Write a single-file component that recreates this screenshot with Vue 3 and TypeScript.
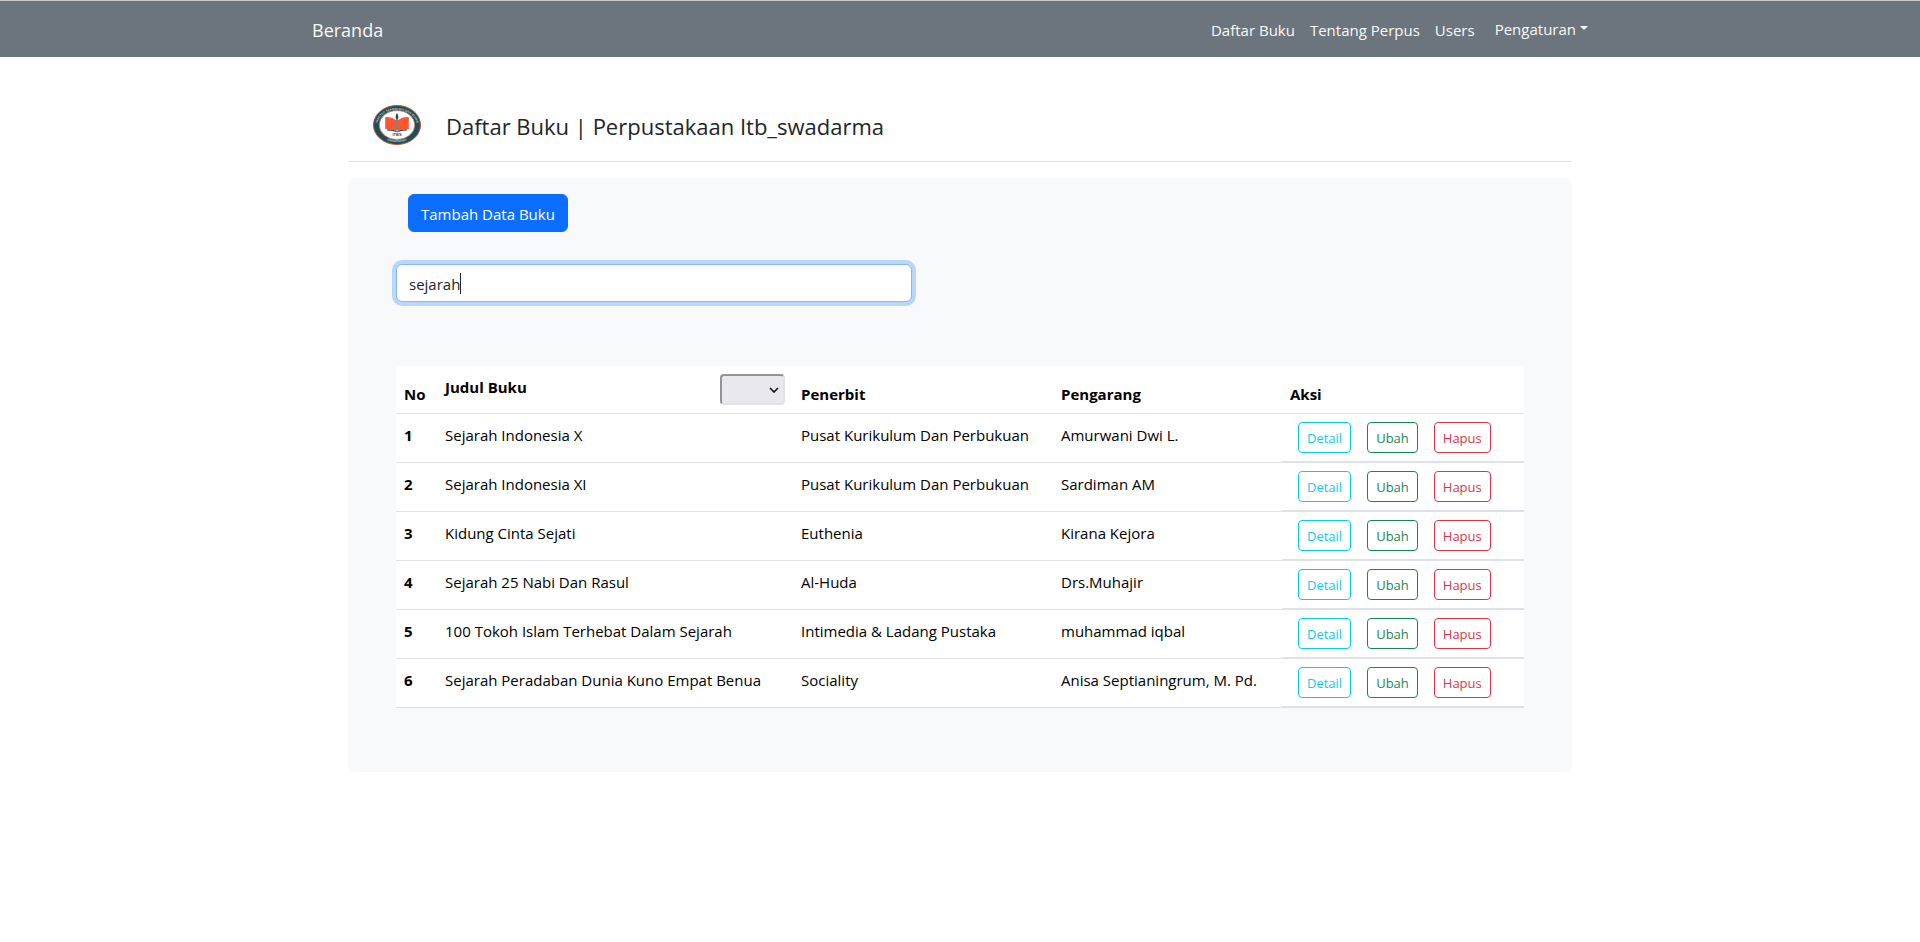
<script setup lang="ts">
import { computed, onMounted, ref } from 'vue'

interface Book {
  id: number
  title: string
  publisher: string
  author: string
}

const books: Book[] = [
  { id: 1, title: 'Sejarah Indonesia X', publisher: 'Pusat Kurikulum Dan Perbukuan', author: 'Amurwani Dwi L.' },
  { id: 2, title: 'Sejarah Indonesia XI', publisher: 'Pusat Kurikulum Dan Perbukuan', author: 'Sardiman AM' },
  { id: 3, title: 'Kidung Cinta Sejati', publisher: 'Euthenia', author: 'Kirana Kejora' },
  { id: 4, title: 'Sejarah 25 Nabi Dan Rasul', publisher: 'Al-Huda', author: 'Drs.Muhajir' },
  { id: 5, title: '100 Tokoh Islam Terhebat Dalam Sejarah', publisher: 'Intimedia & Ladang Pustaka', author: 'muhammad iqbal' },
  { id: 6, title: 'Sejarah Peradaban Dunia Kuno Empat Benua', publisher: 'Sociality', author: 'Anisa Septianingrum, M. Pd.' },
]

const query = ref('sejarah')
const order = ref('')
const searchBox = ref<HTMLInputElement | null>(null)

const rows = computed<Book[]>(() => {
  if (!order.value) return books
  const sorted = [...books].sort((a, b) => a.title.localeCompare(b.title))
  return order.value === 'asc' ? sorted : sorted.reverse()
})

onMounted(() => searchBox.value?.focus())
</script>

<template>
  <div class="page">
    <header class="topbar">
      <nav class="container topbar-inner" aria-label="Utama">
        <a class="brand" href="#">Beranda</a>
        <ul class="links">
          <li><a href="#buku">Daftar Buku</a></li>
          <li><a href="#tentang">Tentang Perpus</a></li>
          <li><a href="#users">Users</a></li>
        </ul>
        <button class="menu" type="button" aria-haspopup="true">
          Pengaturan<span class="caret" aria-hidden="true"></span>
        </button>
      </nav>
    </header>

    <main class="container content">
      <div class="heading">
        <svg class="logo" viewBox="0 0 48 40" aria-hidden="true">
          <ellipse cx="24" cy="20" rx="23.5" ry="19.5" fill="#1f4f55" stroke="#b5583f" />
          <ellipse cx="24" cy="20" rx="17.8" ry="14.4" fill="#fff" stroke="#c8674c" stroke-width="0.8" />
          <path id="ring-top" d="M4.6 24 A19.8 15.9 0 1 1 43.4 24" fill="none" />
          <path id="ring-bottom" d="M4 27 A22.2 18 0 0 0 44 27" fill="none" />
          <text class="ring"><textPath href="#ring-top" startOffset="50%">INSTITUT TEKNOLOGI DAN BISNIS</textPath></text>
          <text class="ring"><textPath href="#ring-bottom" startOffset="50%">SWADHARMA</textPath></text>
          <path d="M12.2 12.2 Q18.5 11.6 23.2 15.2 V26 Q18.5 23.4 12.2 24Z" fill="#ff5630" />
          <path d="M35.8 12.2 Q29.5 11.6 24.8 15.2 V26 Q29.5 23.4 35.8 24Z" fill="#ff5630" />
          <path d="M24 8 Q26.4 11.5 24.6 14.5 V25.5 H23.4 V14.5 Q21.6 11.5 24 8Z" fill="#1f4f55" />
          <path d="M14 24.4 Q20 24 24 26.4 Q28 24 34 24.4 V25.5 Q28 25.4 24 27.3 Q20 25.4 14 25.5Z" fill="#1f4f55" />
          <text class="initials" x="24" y="31">ITBS</text>
        </svg>
        <h1>Daftar Buku | Perpustakaan Itb_swadarma</h1>
      </div>

      <section class="panel" aria-label="Daftar buku">
        <button class="add" type="button">Tambah Data Buku</button>

        <div class="search">
          <input ref="searchBox" v-model="query" type="text" aria-label="Cari buku" autocomplete="off" spellcheck="false" />
          <span class="cursor" aria-hidden="true">{{ query }}</span>
        </div>

        <table>
          <colgroup>
            <col class="c-no" />
            <col class="c-title" />
            <col class="c-publisher" />
            <col class="c-author" />
            <col class="c-action" />
          </colgroup>
          <thead>
            <tr>
              <th scope="col">No</th>
              <th scope="col" class="sortable">
                <div class="title-head">
                  <label for="order">Judul Buku</label>
                  <span class="picker">
                    <select id="order" v-model="order">
                      <option value=""></option>
                      <option value="asc">A-Z</option>
                      <option value="desc">Z-A</option>
                    </select>
                    <svg viewBox="0 0 10 6" aria-hidden="true">
                      <path d="M1 1 L5 5 L9 1" fill="none" stroke="#111" stroke-width="1.6" />
                    </svg>
                  </span>
                </div>
              </th>
              <th scope="col">Penerbit</th>
              <th scope="col">Pengarang</th>
              <th scope="col">Aksi</th>
            </tr>
          </thead>
          <tbody>
            <tr v-for="(book, index) in rows" :key="book.id">
              <th scope="row">{{ index + 1 }}</th>
              <td>{{ book.title }}</td>
              <td>{{ book.publisher }}</td>
              <td>{{ book.author }}</td>
              <td class="actions">
                <div class="buttons">
                  <button class="info" type="button">Detail</button>
                  <button class="success" type="button">Ubah</button>
                  <button class="danger" type="button">Hapus</button>
                </div>
              </td>
            </tr>
          </tbody>
        </table>
      </section>
    </main>
  </div>
</template>

<style>
body {
  margin: 0;
  background: #fff;
}
</style>

<style scoped>
.page,
.page button,
.page input,
.page select {
  font-family: "Open Sans", "Noto Sans", sans-serif;
  font-size: 15px;
  line-height: 24px;
}

.page {
  color: #212529;
}

.page * {
  box-sizing: border-box;
}

.container {
  max-width: 1320px;
  margin: 0 auto;
}

.topbar {
  background: #6c757d;
  border-top: 1px solid #c9cbc8;
}

.topbar-inner {
  display: flex;
  align-items: center;
  padding: 10px 32px 8px 12px;
  min-height: 56px;
}

.topbar a {
  color: #f8f9fa;
  text-decoration: none;
}

.topbar .brand {
  font-size: 18px;
  line-height: 30px;
  margin-right: auto;
}

.links {
  display: flex;
  gap: 15px;
  list-style: none;
  margin: 0;
  padding: 0;
}

.page .menu {
  display: flex;
  align-items: center;
  margin: 0 0 2px 20px;
  padding: 0;
  border: 0;
  background: none;
  color: #f8f9fa;
}

.caret {
  margin: 0 0 2px 4px;
  border: 4px solid transparent;
  border-top-color: #f8f9fa;
  border-bottom: 0;
}

.content {
  padding: 48px 48px 0;
}

.heading {
  display: flex;
  align-items: center;
  gap: 25px;
  padding: 0 25px 16px;
  border-bottom: 1px solid #dee2e6;
}

.logo {
  flex: none;
  width: 48px;
  height: 40px;
}

.ring {
  fill: #b9cbcb;
  font: 700 3px "Liberation Sans", sans-serif;
  text-anchor: middle;
}

.initials {
  fill: #1f4f55;
  font: 700 4px "Liberation Sans", sans-serif;
  text-anchor: middle;
}

h1 {
  margin: 2px 0 0;
  font-size: 22px;
  font-weight: 400;
  line-height: 28px;
}

.panel {
  margin-top: 16px;
  padding: 16px 48px 64px;
  border-radius: 8px;
  background: #f8f9fb;
}

.page .add {
  display: block;
  margin-left: 12px;
  padding: 7px 12px 5px;
  border: 1px solid #0d6efd;
  border-radius: 6px;
  background: #0d6efd;
  color: #fff;
}

.search {
  position: relative;
  max-width: 516px;
  margin: 32px 0 64px;
}

.search input {
  display: block;
  width: 100%;
  height: 38px;
  padding: 7px 12px 5px;
  border: 1px solid #ced4da;
  border-radius: 6px;
  background: #fff;
  color: #212529;
  caret-color: transparent;
  outline: 0;
}

.search input:focus {
  border-color: #86b7fe;
  box-shadow: 0 0 0 4px #bbd6fb;
}

.cursor {
  position: absolute;
  top: 9px;
  left: 13px;
  height: 21px;
  border-right: 1px solid #212529;
  color: transparent;
  line-height: 21px;
  white-space: pre;
  pointer-events: none;
}

table {
  width: 100%;
  border-collapse: separate;
  border-spacing: 0;
  table-layout: fixed;
  background: #fff;
  color: #000;
}

.c-no {
  width: 41px;
}

.c-title {
  width: 356px;
}

.c-publisher {
  width: 260px;
}

.c-author {
  width: 229px;
}

.c-action {
  width: 242px;
}

th,
td {
  padding: 9px 8px 7px;
  border-bottom: 1px solid #dee2e6;
  text-align: left;
  vertical-align: top;
}

thead th {
  vertical-align: bottom;
  white-space: nowrap;
}

thead .sortable {
  padding: 8px;
}

.title-head {
  display: flex;
  justify-content: space-between;
  align-items: flex-start;
}

.title-head label {
  padding-top: 1px;
}

.picker {
  position: relative;
}

.page select {
  display: block;
  width: 65px;
  height: 31px;
  padding: 0 20px 0 4px;
  border: 2px solid #e3e3e3;
  border-top-color: #949494;
  border-left-color: #949494;
  border-radius: 4px;
  background: #e9e9ed;
  appearance: none;
}

.picker svg {
  position: absolute;
  top: 13px;
  right: 6px;
  width: 10px;
  height: 6px;
  pointer-events: none;
}

tbody .actions {
  padding: 8px;
  border-bottom-width: 2px;
}

.buttons {
  display: flex;
  gap: 16px;
  padding-left: 8px;
}

.buttons button {
  padding: 5px 8px 3px;
  border: 1px solid currentColor;
  border-radius: 4px;
  background: none;
  font-size: 13px;
  line-height: 21px;
}

.info {
  color: #0dcaf0;
}

.success {
  color: #198754;
}

.danger {
  color: #dc3545;
}
</style>
